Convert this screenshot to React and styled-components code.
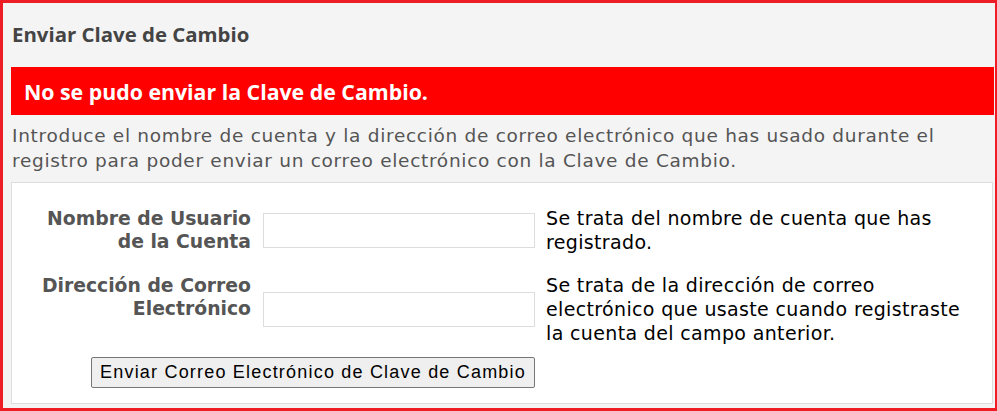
import { Fragment } from "react";
import styled, { createGlobalStyle } from "styled-components";

const GlobalStyle = createGlobalStyle`
  html, body {
    margin: 0;
    padding: 0;
    background: #f4f4f4;
  }
  body {
    font-family: "DejaVu Sans", Verdana, sans-serif;
  }
`;

const Frame = styled.div`
  box-sizing: border-box;
  width: 997px;
  height: 411px;
  border: 3px solid #ee1d25;
  border-right-width: 2px;
  background: #f4f4f4;
  padding: 17px 1px 0 8px;
  overflow: hidden;
`;

const Title = styled.h2`
  margin: 0 0 0 1px;
  font-family: "Open Sans", "DejaVu Sans", sans-serif;
  font-size: 20.4px;
  line-height: 28px;
  font-weight: bold;
  color: #444;
`;

const Alert = styled.div`
  margin-top: 19px;
  height: 48px;
  display: flex;
  align-items: center;
  padding: 0 13px;
  background: #ff0000;
  color: #fff;
  font-family: "Open Sans", "DejaVu Sans", sans-serif;
  font-size: 21.3px;
  font-weight: bold;
`;

const Intro = styled.p`
  margin: 8px 0 0 1px;
  max-width: 960px;
  font-size: 18.5px;
  line-height: 25px;
  letter-spacing: 0.7px;
  color: #555;
`;

const FormBox = styled.div`
  margin-top: 9px;
  margin-right: 1px;
  background: #fff;
  border: 1px solid #ddd;
  padding: 23px 0 15px 0;
  display: grid;
  grid-template-columns: 239px 272px 1fr;
  column-gap: 12px;
  row-gap: 19px;
  align-items: first baseline;
`;

const Label = styled.label`
  text-align: right;
  font-size: 18.8px;
  line-height: 23px;
  font-weight: bold;
  color: #555;
`;

const Input = styled.input`
  box-sizing: border-box;
  align-self: center;
  width: 272px;
  height: 35px;
  margin: 0;
  border: 1px solid #ddd;
  background: #fff;
  outline: none;
`;

const Hint = styled.div`
  margin-left: -1px;
  max-width: 428px;
  font-size: 19px;
  line-height: 24px;
  letter-spacing: 0.35px;
  color: #000;
`;

const ButtonRow = styled.div`
  grid-column: 1 / 3;
  align-self: start;
  display: flex;
  justify-content: flex-end;
  margin-top: -7px;
`;

const Button = styled.button`
  box-sizing: border-box;
  height: 31px;
  padding: 0 8px;
  font-family: "Liberation Sans", Arial, sans-serif;
  font-size: 18px;
  letter-spacing: 1.2px;
  color: #000;
  background: #efefef;
  border: 1px solid #767676;
  border-radius: 2px;
`;

const fields = [
  {
    id: "user",
    label: ["Nombre de Usuario", "de la Cuenta"],
    hint: "Se trata del nombre de cuenta que has registrado.",
  },
  {
    id: "email",
    label: ["Dirección de Correo", "Electrónico"],
    hint:
      "Se trata de la dirección de correo electrónico que usaste cuando registraste la cuenta del campo anterior.",
  },
];

export default function App() {
  return (
    <>
      <GlobalStyle />
      <Frame>
        <Title>Enviar Clave de Cambio</Title>
        <Alert>No se pudo enviar la Clave de Cambio.</Alert>
        <Intro>
          Introduce el nombre de cuenta y la dirección de correo electrónico
          que has usado durante el registro para poder enviar un correo
          electrónico con la Clave de Cambio.
        </Intro>
        <FormBox>
          {fields.map((f) => (
            <Fragment key={f.id}>
              <Label htmlFor={f.id}>
                {f.label[0]}
                <br />
                {f.label[1]}
              </Label>
              <Input id={f.id} type="text" />
              <Hint>{f.hint}</Hint>
            </Fragment>
          ))}
          <ButtonRow>
            <Button type="button">
              Enviar Correo Electrónico de Clave de Cambio
            </Button>
          </ButtonRow>
        </FormBox>
      </Frame>
    </>
  );
}
